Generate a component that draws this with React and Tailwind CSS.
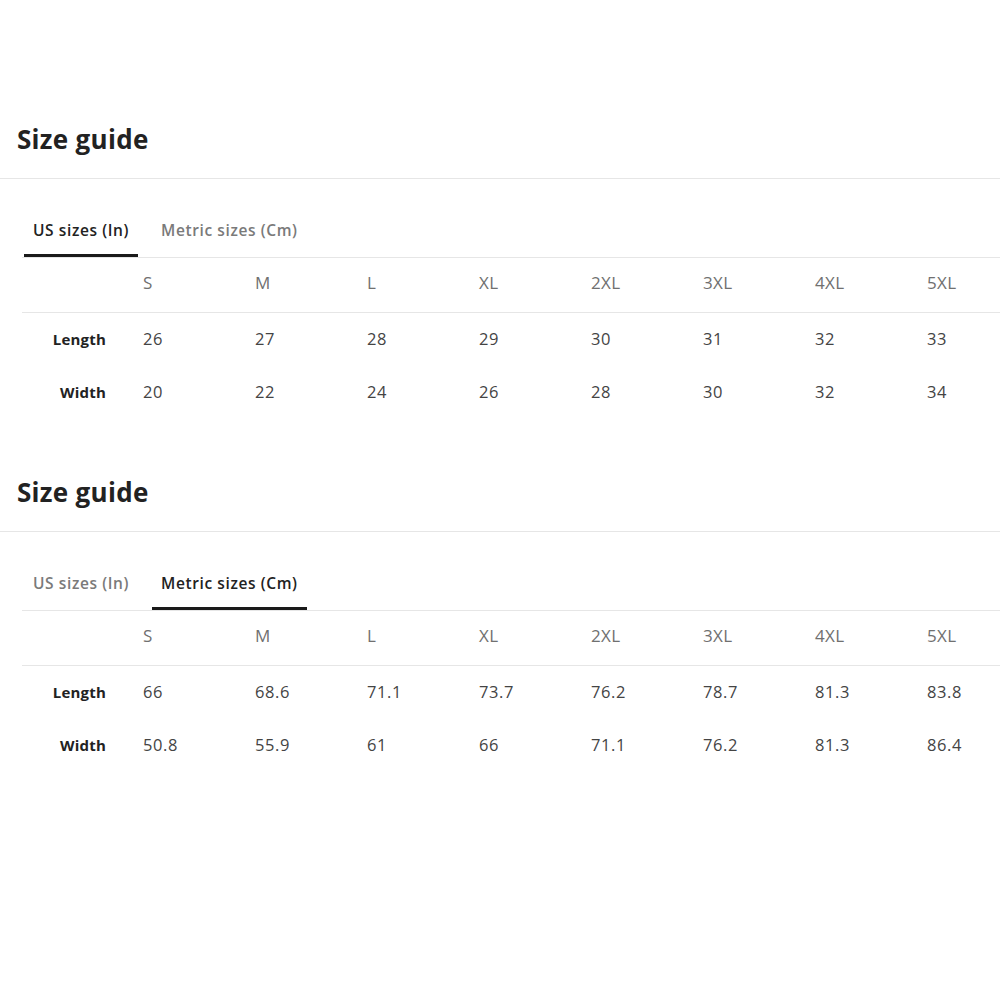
import React from "react";

const sizes = ["S", "M", "L", "XL", "2XL", "3XL", "4XL", "5XL"];

const guides = [
  {
    active: 0,
    rows: [
      { label: "Length", values: ["26", "27", "28", "29", "30", "31", "32", "33"] },
      { label: "Width", values: ["20", "22", "24", "26", "28", "30", "32", "34"] },
    ],
  },
  {
    active: 1,
    rows: [
      { label: "Length", values: ["66", "68.6", "71.1", "73.7", "76.2", "78.7", "81.3", "83.8"] },
      { label: "Width", values: ["50.8", "55.9", "61", "66", "71.1", "76.2", "81.3", "86.4"] },
    ],
  },
];

const tabs = ["US sizes (In)", "Metric sizes (Cm)"];

function SizeGuide({ active, rows }) {
  return (
    <section>
      <h2 className="pl-[17px] pb-[23px] text-[26px] font-bold leading-[31px] tracking-[0.3px] text-[#222]">
        Size guide
      </h2>
      <div className="border-t border-[#e6e6e6]" />
      <div className="ml-[22px] pt-[33px]">
        <div className="flex gap-[14px] border-b border-[#e6e6e6] pl-[2px]">
          {tabs.map((t, i) => (
            <div
              key={t}
              className={
                "px-[9px] pt-[8px] pb-[14px] text-[15.5px] font-semibold leading-5 tracking-[0.6px] border-b-[3px] " +
                (i === active
                  ? "border-[#1a1a1a] text-[#222]"
                  : "border-transparent text-[#7a7a7a]")
              }
            >
              {t}
            </div>
          ))}
        </div>
        <div className="grid grid-cols-[121px_repeat(7,112px)_1fr] h-[55px] items-center border-b border-[#e6e6e6] text-[17px] tracking-[0.4px] text-[#707070]">
          <div />
          {sizes.map((s) => (
            <div key={s} className="pb-[5px]">{s}</div>
          ))}
        </div>
        {rows.map((r) => (
          <div
            key={r.label}
            className="grid grid-cols-[121px_repeat(7,112px)_1fr] h-[53px] items-center text-[16.5px] tracking-[0.6px] text-[#444]"
          >
            <div className="pr-[37px] pb-px text-right text-[15px] font-bold tracking-[0.2px] text-[#222]">
              {r.label}
            </div>
            {r.values.map((v, i) => (
              <div key={i} className="pb-px">{v}</div>
            ))}
          </div>
        ))}
      </div>
    </section>
  );
}

export default function App() {
  return (
    <div
      className="h-[1000px] w-[1000px] overflow-hidden bg-white pt-[124px]"
      style={{ fontFamily: "'Open Sans', sans-serif" }}
    >
      <div className="flex flex-col gap-[58px]">
        {guides.map((g, i) => (
          <SizeGuide key={i} active={g.active} rows={g.rows} />
        ))}
      </div>
    </div>
  );
}
